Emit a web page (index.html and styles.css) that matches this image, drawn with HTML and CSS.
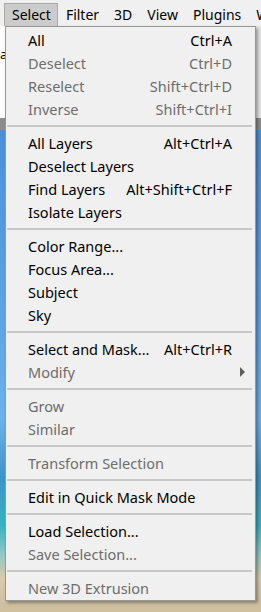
FILE: index.html
```html
<!DOCTYPE html>
<html lang="en">
<head>
    <meta charset="UTF-8">
    <meta name="viewport" content="width=device-width, initial-scale=1.0">
    <title>Select menu</title>
    <link rel="stylesheet" href="styles.css">
</head>
<body>
    <div class="app">
        <!-- Barre de menus -->
        <nav class="menubar">
            <span class="menubar-item active">Select</span>
            <span class="menubar-item">Filter</span>
            <span class="menubar-item">3D</span>
            <span class="menubar-item">View</span>
            <span class="menubar-item">Plugins</span>
            <span class="menubar-item">Window</span>
        </nav>

        <!-- Zone de travail derrière le menu -->
        <div class="workspace">
            <div class="optionsbar"><span class="doc-text">a</span></div>
            <div class="canvas"></div>
        </div>

        <!-- Menu déroulant -->
        <ul class="dropdown">
            <li class="item"><span>All</span><span class="shortcut">Ctrl+A</span></li>
            <li class="item disabled"><span>Deselect</span><span class="shortcut">Ctrl+D</span></li>
            <li class="item disabled"><span>Reselect</span><span class="shortcut">Shift+Ctrl+D</span></li>
            <li class="item disabled"><span>Inverse</span><span class="shortcut">Shift+Ctrl+I</span></li>
            <li class="sep"></li>
            <li class="item"><span>All Layers</span><span class="shortcut">Alt+Ctrl+A</span></li>
            <li class="item"><span>Deselect Layers</span></li>
            <li class="item"><span>Find Layers</span><span class="shortcut">Alt+Shift+Ctrl+F</span></li>
            <li class="item"><span>Isolate Layers</span></li>
            <li class="sep"></li>
            <li class="item"><span>Color Range...</span></li>
            <li class="item"><span>Focus Area...</span></li>
            <li class="item"><span>Subject</span></li>
            <li class="item"><span>Sky</span></li>
            <li class="sep"></li>
            <li class="item"><span>Select and Mask...</span><span class="shortcut">Alt+Ctrl+R</span></li>
            <li class="item disabled"><span>Modify</span><span class="arrow"></span></li>
            <li class="sep"></li>
            <li class="item disabled"><span>Grow</span></li>
            <li class="item disabled"><span>Similar</span></li>
            <li class="sep"></li>
            <li class="item disabled"><span>Transform Selection</span></li>
            <li class="sep"></li>
            <li class="item"><span>Edit in Quick Mask Mode</span></li>
            <li class="sep"></li>
            <li class="item"><span>Load Selection...</span></li>
            <li class="item disabled"><span>Save Selection...</span></li>
            <li class="sep"></li>
            <li class="item disabled"><span>New 3D Extrusion</span></li>
        </ul>
    </div>
</body>
</html>
```

FILE: styles.css
```css
/* GLOBAL */
body {
    margin: 0;
    font-family: "Noto Sans", "Open Sans", sans-serif;
    font-size: 14px;
    color: #000;
    background-color: #f0f0f0;
}

.app {
    position: relative;
    width: 261px;
    height: 612px;
    overflow: hidden;
}

/* MENU BAR */
.menubar {
    display: flex;
    height: 26px;
    padding-left: 4px;
    background-color: #f0f0f0;
    white-space: nowrap;
}

.menubar-item {
    box-sizing: border-box;
    height: 23px;
    margin-top: 3px;
    padding: 0 6px 0 7px;
    line-height: 21px;
    border: 1px solid transparent;
}

.menubar-item.active {
    background-color: #cccccc;
    border-color: #a9a9a9;
    border-bottom: none;
}

/* WORKSPACE */
.workspace {
    display: flex;
    flex-direction: column;
    height: 586px;
}

.optionsbar {
    height: 92px;
    background: linear-gradient(to right, #fdfdfd 0, #fdfdfd 6px, #e6e6e6 6px);
    border-bottom: 12px solid #8d8d8d;
    font-size: 13px;
}

.doc-text {
    display: block;
    margin-top: 20px;
    line-height: 16px;
}

.canvas {
    flex: 1;
    background: linear-gradient(to bottom,
        #4d8fd6 0%,
        #5ea4e6 40%,
        #6db1ea 60%,
        #3f93c8 72%,
        #36b3c2 82%,
        #8fc9c4 88%,
        #d8cbab 93%,
        #cdbd9c 100%);
}

/* DROPDOWN */
.dropdown {
    position: absolute;
    top: 26px;
    left: 5px;
    box-sizing: border-box;
    width: 251px;
    margin: 0;
    padding: 1px 0;
    list-style: none;
    font-size: 14.5px;
    background-color: #f0f0f0;
    border: 1px solid #979797;
    box-shadow: 2px 2px 3px rgba(0, 0, 0, 0.35);
}

.item {
    display: flex;
    justify-content: space-between;
    align-items: center;
    height: 23px;
    padding: 0 23px 0 22px;
    white-space: nowrap;
}

.item.disabled {
    color: #6d6d6d;
}

.arrow {
    width: 0;
    height: 0;
    margin-right: -13px;
    border-left: 5px solid #5e5e5e;
    border-top: 5px solid transparent;
    border-bottom: 5px solid transparent;
}

.sep {
    height: 2px;
    margin: 5px 3px 4px 1px;
    background-color: #c8c8c8;
}
```
